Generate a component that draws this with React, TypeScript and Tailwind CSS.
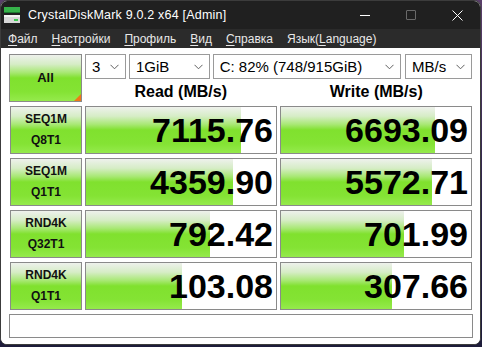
import React from "react";

const grad =
  "bg-[linear-gradient(to_bottom,#eef1ec_0%,#d6edc6_20%,#a8e874_38%,#80e12e_50%,#84e334_80%,#95ea4c_100%)]";

function Chevron() {
  return (
    <svg width="9" height="6" viewBox="0 0 9 6" className="shrink-0">
      <path d="M0.5 0.8 L4.5 4.8 L8.5 0.8" fill="none" stroke="#606060" strokeWidth="1" />
    </svg>
  );
}

function Combo({ w, text }: { w: string; text: string }) {
  return (
    <div
      className={`${w} h-[25px] border border-[#9a9a9a] bg-white flex items-center justify-between pl-[6px] pr-[6px] text-[15px] text-black`}
    >
      <span className="leading-none">{text}</span>
      <Chevron />
    </div>
  );
}

function Label({ a, b }: { a: string; b: string }) {
  return (
    <div
      className={`h-[48px] border border-[#8a8a8a] ${grad} flex flex-col items-center justify-center text-[12px] font-bold leading-[21px] text-[#111]`}
    >
      <span>{a}</span>
      <span>{b}</span>
    </div>
  );
}

function Value({ v, bar }: { v: string; bar: number }) {
  return (
    <div className="relative h-[48px] border border-[#8a8a8a] bg-white overflow-hidden">
      <div className={`absolute left-0 top-0 bottom-0 ${grad}`} style={{ width: bar }} />
      <div
        className="relative h-full flex items-center justify-end pr-[3px] text-[34px] font-bold text-black"
        style={{ fontFamily: "'Liberation Sans', Arial, sans-serif" }}
      >
        {v}
      </div>
    </div>
  );
}

function MenuItem({ k, rest }: { k: string; rest: string }) {
  return (
    <span>
      <span className="underline underline-offset-2 decoration-1">{k}</span>
      {rest}
    </span>
  );
}

export default function App() {
  const rows = [
    { a: "SEQ1M", b: "Q8T1", r: "7115.76", rb: 155, w: "6693.09", wb: 154 },
    { a: "SEQ1M", b: "Q1T1", r: "4359.90", rb: 147, w: "5572.71", wb: 151 },
    { a: "RND4K", b: "Q32T1", r: "792.42", rb: 124, w: "701.99", wb: 123 },
    { a: "RND4K", b: "Q1T1", r: "103.08", rb: 96, w: "307.66", wb: 111 },
  ];
  return (
    <div
      className="w-[482px] h-[347px] bg-[linear-gradient(to_bottom,#5a3f6a,#2c2448_60%,#1e1c3a)] overflow-hidden"
      style={{ fontFamily: "'Liberation Sans', Arial, sans-serif" }}
    >
      <div className="w-[481px] h-[345px] rounded-[7px] overflow-hidden border border-[#3c3c3c] bg-white flex flex-col">
        {/* title bar */}
        <div className="h-[28px] bg-[#202020] flex items-center text-white text-[12.5px] shrink-0">
          <svg width="16" height="16" viewBox="0 0 16 16" className="ml-[3px] mr-[8px]">
            <rect x="0" y="0" width="16" height="5" fill="#36b24a" />
            <rect x="0" y="5" width="16" height="1" fill="#1e7a30" />
            <rect x="0" y="8" width="16" height="8" fill="#d8d8d8" />
            <rect x="0" y="8" width="16" height="2" fill="#f4f4f4" />
            <rect x="10" y="12" width="4" height="2" fill="#3ccc50" />
          </svg>
          <span className="tracking-[0.2px]">CrystalDiskMark 9.0.2 x64 [Admin]</span>
          <div className="ml-auto flex items-center">
            <div className="w-[46px] h-[28px] flex items-center justify-center">
              <div className="w-[10px] h-[1px] bg-white" />
            </div>
            <div className="w-[46px] h-[28px] flex items-center justify-center">
              <div className="w-[10px] h-[10px] border border-[#6a6a6a] rounded-[1px]" />
            </div>
            <div className="w-[46px] h-[28px] flex items-center justify-center">
              <svg width="11" height="11" viewBox="0 0 11 11">
                <path d="M0.5 0.5 L10.5 10.5 M10.5 0.5 L0.5 10.5" stroke="#ffffff" strokeWidth="1" />
              </svg>
            </div>
          </div>
        </div>
        {/* menu bar */}
        <div className="h-[19px] bg-[#2b2b2b] flex items-center text-[#e8e8e8] text-[12px] pl-[7px] gap-[14px] shrink-0">
          <MenuItem k="Ф" rest="айл" />
          <MenuItem k="Н" rest="астройки" />
          <MenuItem k="П" rest="рофиль" />
          <MenuItem k="В" rest="ид" />
          <MenuItem k="С" rest="правка" />
          <span>
            Язык(<span className="underline underline-offset-2 decoration-1">L</span>anguage)
          </span>
        </div>
        {/* content */}
        <div className="flex-1 bg-white pl-[8px] pt-[6px]">
          <div className="grid grid-cols-[73px_192px_192px] gap-x-[3px] gap-y-[4px] [&>*:nth-child(3n)]:ml-[1px]">
            <div
              className={`relative h-[48px] border border-[#8a8a8a] ${grad} flex items-center justify-center text-[13px] font-bold text-[#111]`}
            >
              All
              <div className="absolute right-0 bottom-0 w-0 h-0 border-l-[7px] border-l-transparent border-b-[7px] border-b-[#f07818]" />
            </div>
            <div className="col-span-2 flex flex-col h-[48px]">
              <div className="flex gap-[3px]">
                <Combo w="w-[41px]" text="3" />
                <Combo w="w-[81px]" text="1GiB" />
                <Combo w="w-[189px]" text="C: 82% (748/915GiB)" />
                <div className="ml-[1px]">
                  <Combo w="w-[67px]" text="MB/s" />
                </div>
              </div>
              <div className="flex flex-1 items-end pb-[1px] text-[16px] leading-[18px] font-bold text-black">
                <div className="w-[192px] text-center">Read (MB/s)</div>
                <div className="w-[192px] ml-[4px] text-center">Write (MB/s)</div>
              </div>
            </div>
            {rows.map((r, i) => (
              <React.Fragment key={i}>
                <Label a={r.a} b={r.b} />
                <Value v={r.r} bar={r.rb} />
                <Value v={r.w} bar={r.wb} />
              </React.Fragment>
            ))}
          </div>
          <div className="mt-[4px] w-[464px] h-[24px] border border-[#8a8a8a] bg-white" />
        </div>
      </div>
    </div>
  );
}
